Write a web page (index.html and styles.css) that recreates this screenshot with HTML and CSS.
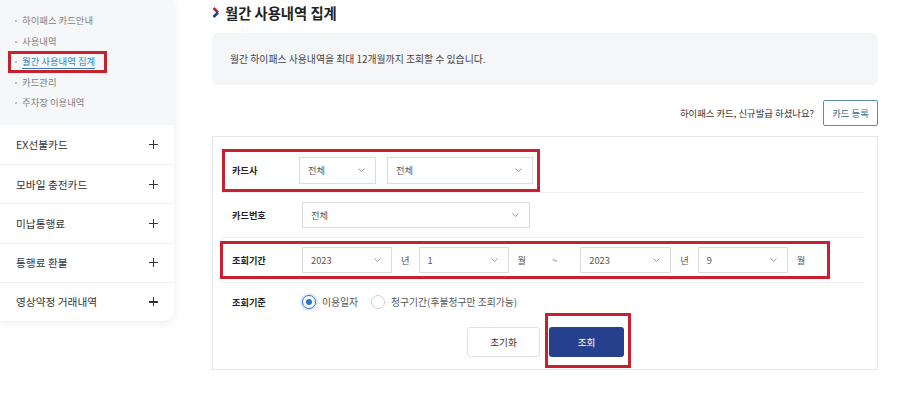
FILE: index.html
```html
<!DOCTYPE html>
<html>
<head>
  <title>월간 사용내역 집계</title>
  <link rel="stylesheet" href="styles.css">
</head>
<body>
  <div class="page">
    <!-- Side menu -->
    <aside class="side">
      <ul class="sub">
        <li>하이패스 카드안내</li>
        <li>사용내역</li>
        <li class="on"><span>월간 사용내역 집계</span></li>
        <li>카드관리</li>
        <li>주차장 이용내역</li>
      </ul>
      <ul class="menu">
        <li>EX선불카드<span class="plus"></span></li>
        <li>모바일 충전카드<span class="plus"></span></li>
        <li>미납통행료<span class="plus"></span></li>
        <li>통행료 환불<span class="plus"></span></li>
        <li>영상약정 거래내역<span class="plus"></span></li>
      </ul>
    </aside>

    <!-- Content -->
    <main class="content">
      <h2 class="title">
        <svg class="title-icon" width="8" height="11" viewBox="0 0 8 11">
          <path d="M1.5 1 L6 5.5" stroke="#c8202f" stroke-width="2.6" fill="none"/>
          <path d="M6 5.5 L1.5 10" stroke="#1d3f8f" stroke-width="2.6" fill="none"/>
        </svg>
        월간 사용내역 집계
      </h2>

      <div class="notice">월간 하이패스 사용내역을 최대 12개월까지 조회할 수 있습니다.</div>

      <div class="reg">
        <span>하이패스 카드, 신규발급 하셨나요?</span>
        <button class="btn-reg">카드 등록</button>
      </div>

      <div class="search">
        <div class="row">
          <div class="field mark f1">
            <span class="label lbl-short">카드사</span>
            <div class="select w77"><span>전체</span><svg width="7" height="4" viewBox="0 0 7 4"><path d="M0.5 0.5 L3.5 3.5 L6.5 0.5" stroke="#9a9a9a" fill="none"/></svg></div>
            <div class="select w146 gap11"><span>전체</span><svg width="7" height="4" viewBox="0 0 7 4"><path d="M0.5 0.5 L3.5 3.5 L6.5 0.5" stroke="#9a9a9a" fill="none"/></svg></div>
          </div>
        </div>

        <div class="row">
          <div class="field">
            <span class="label">카드번호</span>
            <div class="select w228"><span>전체</span><svg width="7" height="4" viewBox="0 0 7 4"><path d="M0.5 0.5 L3.5 3.5 L6.5 0.5" stroke="#9a9a9a" fill="none"/></svg></div>
          </div>
        </div>

        <div class="row">
          <div class="field mark f3">
            <span class="label">조회기간</span>
            <div class="select w90"><span>2023</span><svg width="7" height="4" viewBox="0 0 7 4"><path d="M0.5 0.5 L3.5 3.5 L6.5 0.5" stroke="#9a9a9a" fill="none"/></svg></div>
            <span class="unit">년</span>
            <div class="select w90"><span>1</span><svg width="7" height="4" viewBox="0 0 7 4"><path d="M0.5 0.5 L3.5 3.5 L6.5 0.5" stroke="#9a9a9a" fill="none"/></svg></div>
            <span class="unit">월</span>
            <span class="tilde">~</span>
            <div class="select w91"><span>2023</span><svg width="7" height="4" viewBox="0 0 7 4"><path d="M0.5 0.5 L3.5 3.5 L6.5 0.5" stroke="#9a9a9a" fill="none"/></svg></div>
            <span class="unit">년</span>
            <div class="select w90"><span>9</span><svg width="7" height="4" viewBox="0 0 7 4"><path d="M0.5 0.5 L3.5 3.5 L6.5 0.5" stroke="#9a9a9a" fill="none"/></svg></div>
            <span class="unit">월</span>
          </div>
        </div>

        <div class="row last">
          <div class="field">
            <span class="label">조회기준</span>
            <span class="radio checked"></span><span class="radio-text">이용일자</span>
            <span class="radio"></span><span class="radio-text">청구기간(후불청구만 조회가능)</span>
          </div>
        </div>

        <div class="btns">
          <button class="btn-reset">초기화</button>
          <button class="btn-search">조회</button>
        </div>
      </div>
    </main>
  </div>
</body>
</html>
```

FILE: styles.css
```css
html, body {
  margin: 0;
  padding: 0;
  background: #fff;
}
body {
  font-family: "Noto Sans CJK KR", "Noto Sans", sans-serif;
  color: #333;
  width: 900px;
  height: 396px;
  overflow: hidden;
}
ul {
  list-style: none;
  margin: 0;
  padding: 0;
}
button {
  font-family: inherit;
  cursor: pointer;
}
.page {
  display: flex;
  align-items: flex-start;
}

/* side menu */
.side {
  width: 174px;
  flex: 0 0 174px;
  background: #fff;
  border-radius: 0 0 10px 0;
  box-shadow: 0 2px 10px rgba(0, 0, 0, 0.08);
  overflow: hidden;
}
.sub {
  background: #f6f7f9;
  padding: 10px 0 12px 0;
  height: 103px;
}
.sub li {
  position: relative;
  font-size: 9.4px;
  line-height: 20.5px;
  color: #808080;
  padding-left: 22px;
}
.sub li::before {
  content: "";
  position: absolute;
  left: 15px;
  top: 10px;
  width: 2px;
  height: 2px;
  background: #aaa;
  border-radius: 50%;
}
.sub li.on span {
  color: #2f7fbd;
  border-bottom: 1px solid #2f7fbd;
  line-height: 13px;
}
.sub li.on::after {
  content: "";
  position: absolute;
  left: 8px;
  top: 0px;
  width: 93px;
  height: 16px;
  border: 3px solid #c8202f;
}
.menu li {
  box-sizing: border-box;
  height: 39.2px;
  display: flex;
  align-items: center;
  justify-content: space-between;
  padding: 0 16px;
  font-size: 10.7px;
  color: #333;
  border-top: 1px solid #eeeff1;
}
.menu li:first-child {
  border-top: none;
}
.plus {
  position: relative;
  width: 9px;
  height: 9px;
}
.plus::before,
.plus::after {
  content: "";
  position: absolute;
  background: #333;
}
.plus::before {
  left: 0;
  top: 4px;
  width: 9px;
  height: 1.2px;
}
.plus::after {
  left: 4px;
  top: 0;
  width: 1.2px;
  height: 9px;
}

/* content */
.content {
  margin-left: 38px;
  width: 666px;
}
.title {
  margin: 0;
  height: 24px;
  display: flex;
  align-items: center;
  font-size: 14.3px;
  font-weight: 700;
  color: #222;
}
.title-icon {
  margin: 0 5px 0 0;
}
.notice {
  margin-top: 9px;
  height: 52px;
  box-sizing: border-box;
  padding-left: 18px;
  display: flex;
  align-items: center;
  background: #f5f6f8;
  border-radius: 6px;
  font-size: 9.85px;
  color: #444;
}
.reg {
  margin-top: 15px;
  display: flex;
  justify-content: flex-end;
  align-items: center;
  font-size: 9.4px;
  color: #333;
}
.btn-reg {
  margin-left: 9px;
  width: 55px;
  height: 26px;
  background: #fff;
  border: 1px solid #5b8fa3;
  border-radius: 2px;
  color: #2f6f8a;
  font-size: 9.4px;
  padding: 0;
}

/* search form */
.search {
  margin-top: 10px;
  border: 1px solid #e6e6e6;
  padding: 11px 14px 12px 9px;
}
.row {
  box-sizing: border-box;
  height: 45px;
  display: flex;
  align-items: center;
  border-bottom: 1px solid #eeeeee;
}
.row.last {
  height: 38px;
  border-bottom: none;
}
.field {
  display: flex;
  align-items: center;
  border: 3px solid transparent;
  padding: 5px 7px;
}
.field.mark {
  border-color: #c8202f;
}
.field.f1 {
  padding: 5px 4px 5px 7px;
}
.field.f3 {
  padding: 3px 13px 3px 7px;
  margin-left: -2px;
}
.f3 .label {
  margin-left: 2px;
}
.label {
  width: 70px;
  font-size: 9.2px;
  font-weight: 700;
  color: #222;
}
.label.lbl-short {
  width: 67px;
}
.select {
  box-sizing: border-box;
  height: 26px;
  display: flex;
  align-items: center;
  justify-content: space-between;
  padding: 0 10px 0 8px;
  border: 1px solid #dcdcdc;
  background: #fff;
  font-size: 9.3px;
  color: #555;
}
.f1 .select {
  height: 27px;
}
.w77 { width: 77px; }
.w90 { width: 90px; }
.w91 { width: 91px; }
.w146 { width: 146px; }
.w228 { width: 228px; }
.gap11 { margin-left: 11px; }
.unit {
  font-size: 9.3px;
  color: #555;
  margin: 0 9px 0 9px;
}
.tilde {
  font-size: 9.3px;
  color: #777;
  margin: 0 23px 0 17px;
}
.radio {
  box-sizing: border-box;
  width: 14px;
  height: 14px;
  border: 1px solid #cfcfcf;
  border-radius: 50%;
  background: #fff;
  position: relative;
}
.radio.checked {
  border-color: #2a72cf;
  box-shadow: 0 0 0 2px rgba(42, 114, 207, 0.15);
}
.radio.checked::after {
  content: "";
  position: absolute;
  left: 3px;
  top: 3px;
  width: 6px;
  height: 6px;
  border-radius: 50%;
  background: #2a72cf;
}
.radio-text {
  font-size: 9.8px;
  color: #555;
  margin: 0 13px 0 6px;
}
.btns {
  margin-top: 6px;
  padding-left: 6px;
  display: flex;
  justify-content: center;
  gap: 9px;
}
.btn-reset,
.btn-search {
  height: 30px;
  border-radius: 3px;
  font-size: 9.6px;
  padding: 0;
}
.btn-reset {
  width: 73px;
  background: #fff;
  border: 1px solid #e2e2e2;
  color: #333;
}
.btn-search {
  position: relative;
  width: 75px;
  background: #25418d;
  border: none;
  color: #fff;
}
.btn-search::after {
  content: "";
  position: absolute;
  left: -4px;
  top: -14px;
  right: -7px;
  bottom: -11px;
  border: 3px solid #c8202f;
}
```
